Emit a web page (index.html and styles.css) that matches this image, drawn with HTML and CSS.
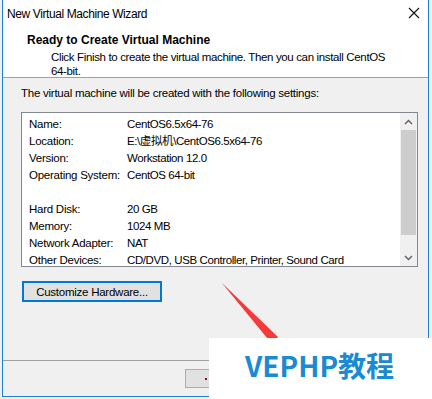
FILE: index.html
```html
<!DOCTYPE html>
<html>
<head>
<meta charset="utf-8">
<link rel="stylesheet" href="styles.css">
</head>
<body>
<div class="window">
  <div class="titlebar">
    <span class="title">New Virtual Machine Wizard</span>
    <svg class="close" width="12" height="12" viewBox="0 0 12 12"><path d="M1 1L11 11M11 1L1 11" stroke="#111" stroke-width="1.1" fill="none"/></svg>
  </div>
  <div class="header">
    <div class="h1">Ready to Create Virtual Machine</div>
    <div class="desc">Click Finish to create the virtual machine. Then you can install CentOS 64-bit.</div>
  </div>
  <div class="content">
    <div class="intro">The virtual machine will be created with the following settings:</div>
    <div class="listbox">
      <div class="rows">
        <div class="row"><span class="k">Name:</span><span class="v">CentOS6.5x64-76</span></div>
        <div class="row"><span class="k">Location:</span><span class="v">E:\虚拟机\CentOS6.5x64-76</span></div>
        <div class="row"><span class="k">Version:</span><span class="v">Workstation 12.0</span></div>
        <div class="row"><span class="k">Operating System:</span><span class="v">CentOS 64-bit</span></div>
        <div class="row"><span class="k"></span><span class="v"></span></div>
        <div class="row"><span class="k">Hard Disk:</span><span class="v">20 GB</span></div>
        <div class="row"><span class="k">Memory:</span><span class="v">1024 MB</span></div>
        <div class="row"><span class="k">Network Adapter:</span><span class="v">NAT</span></div>
        <div class="row"><span class="k">Other Devices:</span><span class="v">CD/DVD, USB Controller, Printer, Sound Card</span></div>
      </div>
      <div class="scrollbar">
        <div class="sb-btn"><svg width="9" height="6" viewBox="0 0 9 6"><path d="M1 5L4.5 1.5L8 5" stroke="#606060" stroke-width="1.4" fill="none"/></svg></div>
        <div class="sb-thumb"></div>
        <div class="sb-track"></div>
        <div class="sb-btn"><svg width="9" height="6" viewBox="0 0 9 6"><path d="M1 1L4.5 4.5L8 1" stroke="#606060" stroke-width="1.4" fill="none"/></svg></div>
      </div>
    </div>
    <div class="btnrow"><button class="btn focused">Customize Hardware...</button></div>
  </div>
  <div class="footer">
    <button class="btn back"><span class="lt"></span></button>
    <button class="btn"></button>
    <button class="btn"></button>
  </div>
</div>
<svg class="arrow" width="432" height="399" viewBox="0 0 432 399"><polygon points="221.5,282.5 278,337 272,344" fill="#f53a3a"/></svg>
<div class="watermark">VEPHP教程</div>
</body>
</html>
```
FILE: styles.css
```css
html, body {
  margin: 0;
  padding: 0;
  background: #f0f0f0;
  width: 432px;
  height: 399px;
  overflow: hidden;
  font-family: "Liberation Sans", Arial, sans-serif;
  font-size: 11.5px;
  letter-spacing: -0.25px;
  color: #000;
}
.window {
  margin-left: 2px;
  width: 425px;
  height: 396px;
  border: 1px solid #1a80d4;
  border-top: none;
  background: #f0f0f0;
  display: flex;
  flex-direction: column;
}
.titlebar {
  height: 28px;
  background: #fff;
  display: flex;
  align-items: center;
  justify-content: space-between;
  padding: 0 8px 0 4px;
}
.title {
  font-size: 12px;
  letter-spacing: -0.4px;
  margin-top: -1px;
  color: #000;
}
.close {
  margin-top: -2px;
}
.header {
  height: 50px;
  background: #fff;
  border-bottom: 1px solid #a0a0a0;
  padding-left: 24px;
  box-sizing: border-box;
}
.h1 {
  font-weight: bold;
  font-size: 12px;
  letter-spacing: 0;
  line-height: 16px;
  margin-top: 4px;
}
.desc {
  margin-left: 24px;
  line-height: 14px;
  margin-top: 2px;
  width: 345px;
  letter-spacing: -0.35px;
}
.content {
  flex: 1;
  padding: 7px 10px 0 18px;
  border-bottom: 1px solid #a0a0a0;
}
.intro {
  line-height: 16px;
}
.listbox {
  margin-top: 11px;
  width: 395px;
  height: 153px;
  border: 1px solid #828790;
  background: #fff;
  display: flex;
}
.rows {
  flex: 1;
  padding: 3px 0 0 7px;
}
.row {
  display: flex;
  height: 17px;
  line-height: 17px;
  white-space: nowrap;
}
.k {
  width: 98px;
  flex: none;
}
.v {
  font-family: "Liberation Sans", "Noto Sans CJK SC", sans-serif;
  letter-spacing: -0.4px;
}
.scrollbar {
  width: 17px;
  background: #f0f0f0;
  display: flex;
  flex-direction: column;
}
.sb-btn {
  height: 17px;
  display: flex;
  align-items: center;
  justify-content: center;
}
.sb-thumb {
  height: 105px;
  background: #cdcdcd;
  margin: 0 1px;
}
.sb-track {
  flex: 1;
}
.btnrow {
  margin-top: 14px;
  padding-left: 1px;
}
.btn {
  font-family: "Liberation Sans", Arial, sans-serif;
  font-size: 11.5px;
  letter-spacing: -0.25px;
  background: #e1e1e1;
  border: 1px solid #adadad;
  height: 19px;
  width: 75px;
  padding: 0;
  color: #000;
}
.btn.focused {
  width: 140px;
  height: 21px;
  border: 2px solid #0078d7;
}
.lt {
  display: inline-block;
  width: 2px;
  height: 2px;
  background: #8a1010;
  margin-left: 19px;
  vertical-align: middle;
}
.back {
  text-align: left;
}
.footer {
  height: 35px;
  display: flex;
  gap: 8px;
  padding: 8px 0 0 182px;
  box-sizing: border-box;
}
.arrow {
  position: absolute;
  left: 0;
  top: 0;
}
.watermark {
  position: absolute;
  left: 209px;
  top: 338px;
  width: 223px;
  height: 61px;
  background: #fff;
  box-sizing: border-box;
  padding: 12px 0 0 36px;
  font-family: "Noto Sans CJK SC", sans-serif;
  font-weight: bold;
  font-size: 28px;
  letter-spacing: 0;
  line-height: 30px;
  color: #1a8ad3;
  white-space: nowrap;
}
```
